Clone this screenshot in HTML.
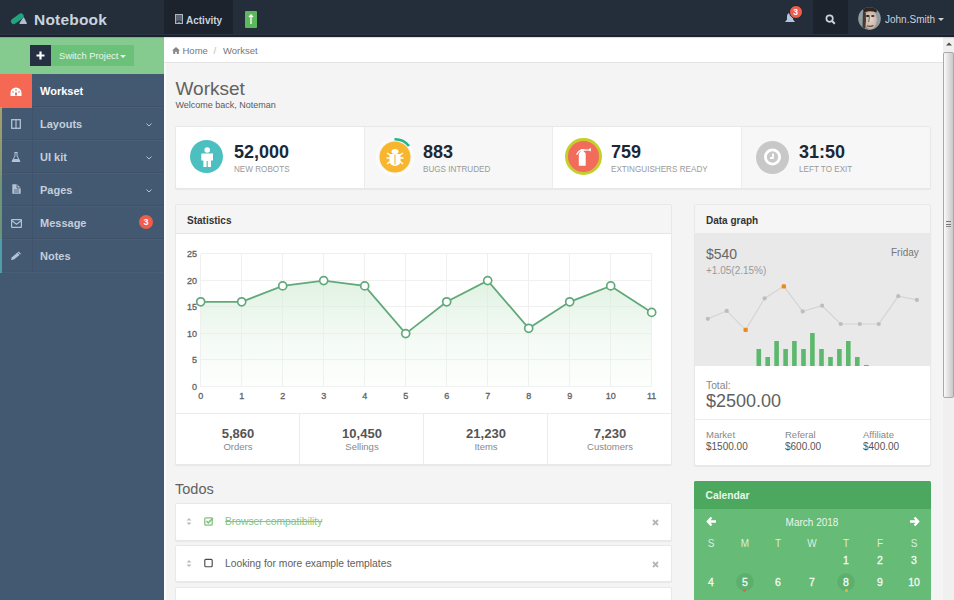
<!DOCTYPE html>
<html><head><meta charset="utf-8">
<style>
*{box-sizing:border-box;margin:0;padding:0}
html,body{width:954px;height:600px;overflow:hidden;background:#f4f4f4;font-family:"Liberation Sans",sans-serif;color:#555}
.a{position:absolute;white-space:nowrap}
#hdr{position:absolute;left:0;top:0;width:954px;height:37px;background:#242d3a;border-bottom:2px solid #1b222b;box-shadow:inset 0 -1px 0 #2a3442,0 1px 1px rgba(0,0,0,0.12);z-index:10}
#brand{left:34px;top:11px;font-size:15.5px;font-weight:bold;color:#c9d3de;letter-spacing:0.2px}
#act{left:164px;top:0;width:69px;height:34px;background:#1c232c}
#srch{left:813px;top:0;width:35px;height:34px;background:#1c232c}
#side{position:absolute;left:0;top:37px;width:164px;height:563px;background:#435871}
#sw{left:0;top:0;width:164px;height:37px;background:#85cb8f}
.nav{position:absolute;left:0;width:164px;height:33px;border-bottom:1px solid #405269;box-shadow:0 1px 0 #485d76}
.nav .ic{position:absolute;left:0;top:0;width:33px;height:33px;border-right:1px solid #3f536c}
.nav .t{position:absolute;left:40px;top:11px;font-size:11px;font-weight:bold;color:#c3cfdc}
.chev{position:absolute;left:146px;top:15px;width:6px;height:6px}
#main{position:absolute;left:164px;top:37px;width:779px;height:563px;background:#f4f4f4;border-left:2px solid #fbfbfb}
#bc{left:0;top:0;width:779px;height:26px;background:#fff;border-bottom:1px solid #e4e4e4}
#sb{position:absolute;left:943px;top:37px;width:11px;height:563px;background:#f0f0f0}
.panel{position:absolute;background:#fff;border:1px solid #e8e8e8;border-radius:2px;box-shadow:0 1px 1px rgba(0,0,0,0.05)}
.ph{position:absolute;left:0;top:0;right:0;height:29px;background:#f5f5f5;border-bottom:1px solid #e6e6e6}
.ph span{position:absolute;left:11px;top:10px;font-size:10px;font-weight:bold;color:#333}
.num{font-size:18px;font-weight:bold;color:#1c2836}
.lbl{font-size:9.8px;color:#9a9a9a;transform:scaleX(0.83);transform-origin:0 0}
.circ{position:absolute;border-radius:50%}
.ax{position:absolute;font-size:9px;color:#666;text-align:center;width:20px}
.ay{position:absolute;font-size:9px;color:#666;text-align:right;width:20px}
.fv{position:absolute;width:124px;text-align:center}
.fv b{display:block;font-size:13px;color:#555}
.fv i{display:block;font-style:normal;font-size:9.5px;color:#888;margin-top:0px}
.cal{position:absolute;width:20px;text-align:center;font-size:10.5px;color:#f4fbf5;-webkit-text-stroke:0.3px #f4fbf5}
</style></head><body>
<div id="hdr">
  <svg class="a" style="left:10px;top:12px" width="18" height="14" viewBox="0 0 18 14"><path d="M10 11.3 L16.3 11.3 L13.6 6 Z" fill="#b3bcd6" stroke="#b3bcd6" stroke-width="1.2" stroke-linejoin="round"/><path d="M3.8 9.3 L10.8 4.2" stroke="#1fa57b" stroke-width="5.6" stroke-linecap="round"/></svg>
  <div id="brand" class="a">Notebook</div>
  <div id="act" class="a">
    <svg class="a" style="left:11px;top:14px" width="8" height="10" viewBox="0 0 8 10"><rect x="0.5" y="0.5" width="7" height="9" fill="#5b6472" stroke="#aab4c4" stroke-width="1"/><path d="M1.5 8.5 Q4 5.5 6.5 8.5" fill="none" stroke="#1c232c" stroke-width="1.2"/><path d="M3 9 Q4 7.8 5 9Z" fill="#c9d3de"/></svg>
    <span class="a" style="left:22px;top:15px;font-size:10px;font-weight:bold;color:#c9d3de">Activity</span>
  </div>
  <div class="a" style="left:245px;top:11px;width:12px;height:17px;background:#5cb85c;border-radius:1px"></div>
  <svg class="a" style="left:245px;top:11px" width="12" height="17" viewBox="0 0 12 17"><path d="M6 4 L6 13 M4 6 L6 4 L8 6" stroke="#fff" stroke-width="1.3" fill="none"/></svg>
  <svg class="a" style="left:784px;top:12px" width="12" height="12" viewBox="0 0 12 12"><path d="M6 1 C3.5 1 3 3 3 5 L3 7.5 L1 10 L11 10 L9 7.5 L9 5 C9 3 8.5 1 6 1Z" fill="#b3c6da"/></svg>
  <div class="a circ" style="left:788.5px;top:4.5px;width:14px;height:14px;background:#ef5d4f;border:1.5px solid #1e2630"></div>
  <div class="a" style="left:789.5px;top:7px;width:12px;text-align:center;font-size:8.5px;font-weight:bold;color:#fff">3</div>
  <div id="srch" class="a">
    <svg class="a" style="left:12px;top:14px" width="11" height="11" viewBox="0 0 11 11"><circle cx="4.6" cy="4.6" r="3.2" stroke="#c9d3de" stroke-width="1.7" fill="none"/><path d="M7 7 L9.8 9.8" stroke="#c9d3de" stroke-width="2"/></svg>
  </div>
  <svg class="a" style="left:858px;top:7px" width="23" height="23" viewBox="0 0 23 23"><defs><clipPath id="av"><circle cx="11.5" cy="11.5" r="11.3"/></clipPath><radialGradient id="fg" cx="0.55" cy="0.5" r="0.6"><stop offset="0" stop-color="#e2d6cc"/><stop offset="0.7" stop-color="#c9b5a6"/><stop offset="1" stop-color="#6d5a4e"/></radialGradient></defs><g clip-path="url(#av)"><rect width="23" height="23" fill="#8e9da1"/><ellipse cx="12" cy="12.5" rx="7" ry="10.5" fill="url(#fg)"/><path d="M4.5 1 Q12 -2 19 2 L18.5 5.5 Q12 3 6 5.5 Z" fill="#2f2622"/><path d="M5 4 L7.8 6 L8 14 L7 22 L4.5 20 Z" fill="#3b2e28" opacity="0.9"/><ellipse cx="9.8" cy="9" rx="1.9" ry="1.1" fill="#231b18"/><ellipse cx="14.8" cy="9" rx="1.7" ry="1" fill="#3a2e28"/><path d="M11.5 9.5 L10.6 15.2" stroke="#8a7060" stroke-width="1.2"/><path d="M9 18.8 Q12.5 20 15.5 18.5" fill="none" stroke="#5a473c" stroke-width="1.1"/></g></svg>
  <div class="a" style="left:885px;top:14px;font-size:10px;color:#c9d3de">John.Smith</div>
  <div class="a" style="left:938px;top:18px;width:0;height:0;border-left:3px solid transparent;border-right:3px solid transparent;border-top:3px solid #c9d3de"></div>
</div>

<div id="side">
  <div id="sw" class="a">
    <div class="a" style="left:30px;top:8px;width:21px;height:21px;background:#253142"></div>
    <svg class="a" style="left:35px;top:13px" width="11" height="11" viewBox="0 0 11 11"><path d="M5.5 1.5 V9.5 M1.5 5.5 H9.5" stroke="#fff" stroke-width="2.2"/></svg>
    <div class="a" style="left:51px;top:8px;width:83px;height:21px;background:#6bc07a"></div>
    <div class="a" style="left:59px;top:12.5px;font-size:9.4px;color:#eaf6ec">Switch Project</div>
    <div class="a" style="left:120px;top:18px;width:0;height:0;border-left:3px solid transparent;border-right:3px solid transparent;border-top:3px solid #eaf6ec"></div>
  </div>
  <!-- NAV -->
  <div class="a" style="left:0;top:70px;width:2px;height:166px;z-index:5;background:linear-gradient(180deg,#b8ab6c 0,#9aa56f 30%,#78a07a 45%,#6f9f7c 78%,#4faab4 80%,#4faab4 100%);opacity:0.85"></div>
  <div class="nav" style="top:37px">
    <div class="ic" style="background:#f56954;border-right:0;width:32px;height:34px"></div>
    <svg class="a" style="left:10px;top:12.5px" width="12" height="10" viewBox="0 0 12 10"><path d="M6 0.5 A5.5 5.5 0 0 0 0.5 6 L0.5 9 L11.5 9 L11.5 6 A5.5 5.5 0 0 0 6 0.5Z" fill="#fff"/><path d="M6 8.5 L6 5.5" stroke="#c0524a" stroke-width="1.5"/><circle cx="3" cy="5" r="0.8" fill="#f56954"/><circle cx="6" cy="3" r="0.8" fill="#f56954"/><circle cx="9" cy="5" r="0.8" fill="#f56954"/></svg>
    <div class="t" style="color:#fff">Workset</div>
  </div>
  <div class="nav" style="top:70px">
    <div class="ic"></div>
    
    <svg class="a" style="left:11px;top:12px" width="10" height="10" viewBox="0 0 10 10"><rect x="0.7" y="0.7" width="8.6" height="8.6" fill="none" stroke="#b3c3d4" stroke-width="1.3"/><path d="M5 0.7 V9.3" stroke="#b3c3d4" stroke-width="1.2"/></svg>
    <div class="t">Layouts</div>
    <svg class="chev" viewBox="0 0 6 6"><path d="M0.5 1.5 L3 4 L5.5 1.5" stroke="#b3c3d4" fill="none" stroke-width="1"/></svg>
  </div>
  <div class="nav" style="top:103px">
    <div class="ic"></div>
    <svg class="a" style="left:11px;top:12px" width="10" height="10" viewBox="0 0 10 10"><path d="M3.5 0.5 H6.5 M4 0.5 V4 L1 9.5 H9 L6 4 V0.5" stroke="#b3c3d4" fill="none" stroke-width="1"/><path d="M2.3 7 H7.7 L9 9.5 H1Z" fill="#b3c3d4"/></svg>
    <div class="t">UI kit</div>
    <svg class="chev" viewBox="0 0 6 6"><path d="M0.5 1.5 L3 4 L5.5 1.5" stroke="#b3c3d4" fill="none" stroke-width="1"/></svg>
  </div>
  <div class="nav" style="top:136px">
    <div class="ic"></div>
    
    <svg class="a" style="left:12px;top:11px" width="9" height="10" viewBox="0 0 9 10"><path d="M0.3 0.3 H5 L8.7 4 V9.7 H0.3Z" fill="#b3c3d4"/><path d="M5 0.3 V4 H8.7" fill="none" stroke="#435670" stroke-width="0.9"/><path d="M2 6 H7 M2 8 H7" stroke="#435670" stroke-width="0.8"/></svg>
    <div class="t">Pages</div>
    <svg class="chev" viewBox="0 0 6 6"><path d="M0.5 1.5 L3 4 L5.5 1.5" stroke="#b3c3d4" fill="none" stroke-width="1"/></svg>
  </div>
  <div class="nav" style="top:169px">
    <div class="ic"></div>
    <svg class="a" style="left:11px;top:12.5px" width="11" height="9" viewBox="0 0 11 9"><rect x="0.6" y="0.6" width="9.8" height="7.8" rx="0.5" fill="none" stroke="#b3c3d4" stroke-width="1.2"/><path d="M0.6 1.5 L5.5 5.3 L10.4 1.5" stroke="#b3c3d4" fill="none" stroke-width="1.2"/></svg>
    <div class="t">Message</div>
    <div class="a circ" style="left:139px;top:9px;width:14px;height:14px;background:#ef5d4f"></div>
    <div class="a" style="left:139px;top:10.5px;width:14px;text-align:center;font-size:9px;font-weight:bold;color:#fff">3</div>
  </div>
  <div class="nav" style="top:202px;border-bottom-color:#415670">
    <div class="ic"></div>
    
    <svg class="a" style="left:10px;top:11px" width="12" height="11" viewBox="0 0 12 11"><path d="M1 10 L1.6 7.6 L8.6 1.6 L11 3.8 L4 9.6Z" fill="#b3c3d4"/><path d="M7.6 2.6 L10 4.8" stroke="#435670" stroke-width="0.8"/></svg>
    <div class="t">Notes</div>
  </div>
</div>

<div id="main"></div>
<div id="bc" class="a" style="left:164px;top:37px">
  <svg class="a" style="left:8px;top:9.5px" width="8" height="7" viewBox="0 0 8 7"><path d="M4 0 L8 3.5 H6.8 V7 H4.8 V4.8 H3.2 V7 H1.2 V3.5 H0Z" fill="#888"/></svg>
  <div class="a" style="left:18.5px;top:7.5px;font-size:9.5px;color:#777">Home</div>
  <div class="a" style="left:49.5px;top:7.5px;font-size:9.5px;color:#bbb">/</div>
  <div class="a" style="left:59px;top:7.5px;font-size:9.5px;color:#777">Workset</div>
</div>
<div class="a" style="left:175.5px;top:78px;font-size:19px;color:#626262">Workset</div>
<div class="a" style="left:175.5px;top:100px;font-size:9px;color:#5a5a5a">Welcome back, Noteman</div>

<!-- STATS -->
<div class="panel" style="left:175px;top:126px;width:756px;height:63px"></div>
<div class="a" style="left:364px;top:127px;width:189px;height:61px;background:#f7f7f7;border-left:1px solid #ececec;border-right:1px solid #ececec"></div>
<div class="a" style="left:741px;top:127px;width:189px;height:61px;background:#f7f7f7;border-left:1px solid #ececec"></div>

<div class="a circ" style="left:190px;top:140px;width:33px;height:33px;background:#4cc0c1"></div>
<svg class="a" style="left:199px;top:146px" width="16" height="22" viewBox="0 0 16 22"><circle cx="8.2" cy="4" r="2.8" fill="#fff"/><path d="M2.3 8 Q2.3 7.5 3 7.5 H13.3 Q14 7 14 7.5 V14.5 H12 V21 H8.8 V15 H7.6 V21 H4.4 V14.5 H2.3Z" fill="#fff"/></svg>
<div class="a num" style="left:234px;top:142px">52,000</div>
<div class="a lbl" style="left:234px;top:163px">NEW ROBOTS</div>

<svg class="a" style="left:374px;top:136px" width="42" height="42" viewBox="0 0 42 42"><circle cx="21" cy="21" r="18" fill="none" stroke="#fbfbfb" stroke-width="2.5"/><path d="M20.5 3.2 A17.8 17.8 0 0 1 35 10" fill="none" stroke="#22b48c" stroke-width="2.6"/><circle cx="21" cy="21" r="15.5" fill="#f8b62f"/>
<g fill="#fff"><ellipse cx="21" cy="15.5" rx="3.5" ry="2.5"/><path d="M15.5 18 H26.5 V25 A5.5 5 0 0 1 15.5 25Z"/><path d="M13 17 L16 19 M29 17 L26 19 M12.5 22 H16 M29.5 22 H26 M13 28 L16 25.5 M29 28 L26 25.5" stroke="#fff" stroke-width="1.4"/></g><path d="M21 18.5 V28.5" stroke="#f8b93c" stroke-width="1.2"/></svg>
<div class="a num" style="left:423px;top:142px">883</div>
<div class="a lbl" style="left:423px;top:163px">BUGS INTRUDED</div>

<div class="a circ" style="left:565px;top:138px;width:37px;height:37px;background:#f26b5b;border:3px solid #c3cf2b"></div>
<svg class="a" style="left:573px;top:146px" width="21" height="21" viewBox="0 0 21 21"><path d="M5.8 8.5 Q5.8 5.6 9.2 5.6 Q12.7 5.6 12.7 8.5 V19.8 H5.8Z" fill="#fff"/><rect x="7.7" y="3" width="3" height="3" fill="#fff"/><path d="M10 3.2 L15.5 3.4 L17.8 1.8 V5.6 L15.5 4.4 L10 5Z" fill="#fff"/><path d="M8.5 4.2 Q5.5 4.8 3.6 8.6" fill="none" stroke="#fff" stroke-width="1.3"/></svg>
<div class="a num" style="left:611px;top:142px">759</div>
<div class="a lbl" style="left:611px;top:163px">EXTINGUISHERS READY</div>

<div class="a circ" style="left:756px;top:140.5px;width:33px;height:33px;background:#c8c8c8"></div>
<svg class="a" style="left:762px;top:146px" width="21" height="21" viewBox="0 0 21 21"><circle cx="10.5" cy="11" r="7.1" fill="none" stroke="#fff" stroke-width="2.8"/><path d="M11 7.5 V12 H8" fill="none" stroke="#fff" stroke-width="1.8"/></svg>
<div class="a num" style="left:799px;top:142px">31:50</div>
<div class="a lbl" style="left:799px;top:163px">LEFT TO EXIT</div>

<!-- STATISTICS -->
<div class="panel" style="left:175px;top:204px;width:497px;height:261px;overflow:hidden">
  <div class="ph"><span>Statistics</span></div>
</div>
<svg class="a" style="left:0;top:0" width="954" height="600">
  <defs><linearGradient id="gf" x1="0" y1="0" x2="0" y2="1"><stop offset="0" stop-color="#d3ecd6" stop-opacity="0.7"/><stop offset="1" stop-color="#eaf6ec" stop-opacity="0.1"/></linearGradient></defs>
  <g stroke="#f0f0f0" stroke-width="1">
    <path d="M200.5 254 V387 M241.5 254 V387 M282.5 254 V387 M323.5 254 V387 M364.5 254 V387 M405.5 254 V387 M446.5 254 V387 M487.5 254 V387 M528.5 254 V387 M569.5 254 V387 M610.5 254 V387 M651.5 254 V387"/>
    <path d="M201 253.5 H652 M201 280.5 H652 M201 306.5 H652 M201 333.5 H652 M201 359.5 H652 M201 386.5 H652"/>
  </g>
  <path d="M200.7,386.6 L200.7,301.8 241.7,301.8 282.7,285.9 323.7,280.6 364.7,285.9 405.7,333.6 446.7,301.8 487.7,280.6 528.7,328.3 569.7,301.8 610.7,285.9 651.7,312.4 L651.7,386.6Z" fill="url(#gf)"/>
  <polyline points="200.7,301.8 241.7,301.8 282.7,285.9 323.7,280.6 364.7,285.9 405.7,333.6 446.7,301.8 487.7,280.6 528.7,328.3 569.7,301.8 610.7,285.9 651.7,312.4" fill="none" stroke="#62a97a" stroke-width="1.8"/>
  <g fill="#fff" stroke="#62a97a" stroke-width="1.7"><circle cx="200.7" cy="301.8" r="4"/><circle cx="241.7" cy="301.8" r="4"/><circle cx="282.7" cy="285.9" r="4"/><circle cx="323.7" cy="280.6" r="4"/><circle cx="364.7" cy="285.9" r="4"/><circle cx="405.7" cy="333.6" r="4"/><circle cx="446.7" cy="301.8" r="4"/><circle cx="487.7" cy="280.6" r="4"/><circle cx="528.7" cy="328.3" r="4"/><circle cx="569.7" cy="301.8" r="4"/><circle cx="610.7" cy="285.9" r="4"/><circle cx="651.7" cy="312.4" r="4"/></g>
  <g font-family="Liberation Sans" font-size="9" fill="#626262" stroke="#626262" stroke-width="0.3" text-anchor="end"><text x="197" y="257">25</text><text x="197" y="284">20</text><text x="197" y="310">15</text><text x="197" y="337">10</text><text x="197" y="363">5</text><text x="197" y="390">0</text></g>
  <g font-family="Liberation Sans" font-size="9" fill="#626262" stroke="#626262" stroke-width="0.3" text-anchor="middle"><text x="200.7" y="399">0</text><text x="241.7" y="399">1</text><text x="282.7" y="399">2</text><text x="323.7" y="399">3</text><text x="364.7" y="399">4</text><text x="405.7" y="399">5</text><text x="446.7" y="399">6</text><text x="487.7" y="399">7</text><text x="528.7" y="399">8</text><text x="569.7" y="399">9</text><text x="610.7" y="399">10</text><text x="651.7" y="399">11</text></g>
</svg>
<div class="a" style="left:176px;top:413px;width:495px;height:1px;background:#ececec"></div>
<div class="a" style="left:299px;top:413px;width:1px;height:51px;background:#ececec"></div>
<div class="a" style="left:423px;top:413px;width:1px;height:51px;background:#ececec"></div>
<div class="a" style="left:547px;top:413px;width:1px;height:51px;background:#ececec"></div>
<div class="fv" style="left:176px;top:426px"><b>5,860</b><i>Orders</i></div>
<div class="fv" style="left:300px;top:426px"><b>10,450</b><i>Sellings</i></div>
<div class="fv" style="left:424px;top:426px"><b>21,230</b><i>Items</i></div>
<div class="fv" style="left:548px;top:426px"><b>7,230</b><i>Customers</i></div>

<!-- TODOS -->
<div class="a" style="left:175px;top:481px;font-size:14.5px;color:#616161">Todos</div>
<div class="panel" style="left:175px;top:503px;width:497px;height:37.5px"></div>
<svg class="a" style="left:186px;top:517px" width="6" height="9" viewBox="0 0 6 9"><path d="M0.5 3.5 L3 1 L5.5 3.5Z M0.5 5.5 L3 8 L5.5 5.5Z" fill="#bbb"/></svg>
<svg class="a" style="left:204px;top:516px" width="10" height="10" viewBox="0 0 10 10"><rect x="0.8" y="1.8" width="7.4" height="7.4" rx="1" fill="none" stroke="#7ec27e" stroke-width="1.3"/><path d="M2.5 5 L4.3 6.8 L9 2" fill="none" stroke="#7ec27e" stroke-width="1.6"/></svg>
<div class="a" style="left:225px;top:516px;font-size:10.3px;color:#84c584;text-decoration:line-through">Browser compatibility</div>
<svg class="a" style="left:652px;top:519px" width="7" height="7" viewBox="0 0 7 7"><path d="M1 1 L6 6 M6 1 L1 6" stroke="#b5b5b5" stroke-width="1.8"/></svg>
<div class="panel" style="left:175px;top:545px;width:497px;height:37px"></div>
<svg class="a" style="left:186px;top:559px" width="6" height="9" viewBox="0 0 6 9"><path d="M0.5 3.5 L3 1 L5.5 3.5Z M0.5 5.5 L3 8 L5.5 5.5Z" fill="#bbb"/></svg>
<svg class="a" style="left:204px;top:558px" width="10" height="10" viewBox="0 0 10 10"><rect x="0.8" y="1.3" width="7.4" height="7.4" rx="1" fill="none" stroke="#4a4a4a" stroke-width="1.15"/></svg>
<div class="a" style="left:225px;top:558px;font-size:10.3px;color:#5e5e5e">Looking for more example templates</div>
<svg class="a" style="left:652px;top:561px" width="7" height="7" viewBox="0 0 7 7"><path d="M1 1 L6 6 M6 1 L1 6" stroke="#b5b5b5" stroke-width="1.8"/></svg>
<div class="panel" style="left:175px;top:586.5px;width:497px;height:30px"></div>

<!-- DATA GRAPH -->
<div class="panel" style="left:694px;top:204px;width:237px;height:262px;overflow:hidden">
  <div class="ph"><span>Data graph</span></div>
  <div class="a" style="left:0;top:28px;width:237px;height:133px;background:#e9e9e9"></div>
</div>
<div class="a" style="left:706px;top:246px;font-size:14px;color:#666">$540</div>
<div class="a" style="left:891px;top:247px;font-size:10px;color:#777">Friday</div>
<div class="a" style="left:706px;top:265px;font-size:10px;color:#999">+1.05(2.15%)</div>
<svg class="a" style="left:0;top:0" width="954" height="600">
  <polyline points="707.8,318.8 726.7,310.9 745.6,329.8 764.7,298.3 783.8,286.3 802.7,311.4 822.1,305.7 840.7,324 859.8,324 878.7,324 898.3,296.2 916.9,299.9" fill="none" stroke="#d4d4d4" stroke-width="1.2"/>
  <g fill="#bdbdbd"><circle cx="707.8" cy="318.8" r="2.1"/><circle cx="726.7" cy="310.9" r="2.1"/><circle cx="764.7" cy="298.3" r="2.1"/><circle cx="802.7" cy="311.4" r="2.1"/><circle cx="822.1" cy="305.7" r="2.1"/><circle cx="840.7" cy="324" r="2.1"/><circle cx="859.8" cy="324" r="2.1"/><circle cx="878.7" cy="324" r="2.1"/><circle cx="898.3" cy="296.2" r="2.1"/><circle cx="916.9" cy="299.9" r="2.1"/></g>
  <g fill="#ee8a1a"><rect x="743.5" y="327.7" width="4.3" height="4.3" rx="1.2"/><rect x="781.7" y="284.2" width="4.3" height="4.3" rx="1.2"/></g>
  <g fill="#5cb86c"><rect x="756.5" y="349" width="4.6" height="17"/><rect x="765.4" y="357" width="4.6" height="9"/><rect x="774.3" y="341" width="4.6" height="25"/><rect x="783.3" y="349" width="4.6" height="17"/><rect x="792.1" y="341" width="4.6" height="25"/><rect x="801.2" y="349" width="4.6" height="17"/><rect x="810.1" y="333" width="4.6" height="33"/><rect x="819.2" y="349" width="4.6" height="17"/><rect x="828.2" y="357" width="4.6" height="9"/><rect x="837.1" y="349" width="4.6" height="17"/><rect x="846" y="341" width="4.6" height="25"/><rect x="855" y="357" width="4.6" height="9"/><rect x="864" y="365" width="4.6" height="1"/></g>
</svg>
<div class="a" style="left:706px;top:380px;font-size:10.3px;color:#888">Total:</div>
<div class="a" style="left:706px;top:391px;font-size:18px;color:#616161">$2500.00</div>
<div class="a" style="left:695px;top:419px;width:235px;height:1px;background:#ececec"></div>
<div class="a" style="left:706px;top:429px;font-size:9.5px;color:#888">Market</div>
<div class="a" style="left:706px;top:441px;font-size:10px;color:#555">$1500.00</div>
<div class="a" style="left:785px;top:429px;font-size:9.5px;color:#888">Referal</div>
<div class="a" style="left:785px;top:441px;font-size:10px;color:#555">$600.00</div>
<div class="a" style="left:863px;top:429px;font-size:9.5px;color:#888">Affiliate</div>
<div class="a" style="left:863px;top:441px;font-size:10px;color:#555">$400.00</div>

<!-- CALENDAR -->
<div class="a" style="left:694px;top:481px;width:237px;height:130px;background:#66bb77;border-radius:2px"></div>
<div class="a" style="left:694px;top:481px;width:237px;height:28px;background:#4ca85f;border-radius:2px 2px 0 0"></div>
<div class="a" style="left:705.5px;top:490px;font-size:10.3px;font-weight:bold;color:#e6f6e8">Calendar</div>
<svg class="a" style="left:706px;top:516px" width="11" height="11" viewBox="0 0 11 11"><path d="M5.5 1.5 L1.8 5.5 L5.5 9.5 M2 5.5 H10" fill="none" stroke="#fff" stroke-width="2.3"/></svg>
<svg class="a" style="left:909px;top:516px" width="11" height="11" viewBox="0 0 11 11"><path d="M5.5 1.5 L9.2 5.5 L5.5 9.5 M9 5.5 H1" fill="none" stroke="#fff" stroke-width="2.3"/></svg>
<div class="a" style="left:772px;top:517px;width:80px;text-align:center;font-size:10px;color:#eaf6ec">March 2018</div>
<div class="cal" style="left:701px;top:537.5px;color:#d9efdd;font-size:10px;-webkit-text-stroke:0">S</div><div class="cal" style="left:735px;top:537.5px;color:#d9efdd;font-size:10px;-webkit-text-stroke:0">M</div><div class="cal" style="left:768px;top:537.5px;color:#d9efdd;font-size:10px;-webkit-text-stroke:0">T</div><div class="cal" style="left:802px;top:537.5px;color:#d9efdd;font-size:10px;-webkit-text-stroke:0">W</div><div class="cal" style="left:836px;top:537.5px;color:#d9efdd;font-size:10px;-webkit-text-stroke:0">T</div><div class="cal" style="left:870px;top:537.5px;color:#d9efdd;font-size:10px;-webkit-text-stroke:0">F</div><div class="cal" style="left:904px;top:537.5px;color:#d9efdd;font-size:10px;-webkit-text-stroke:0">S</div>
<div class="cal" style="left:836px;top:554px">1</div><div class="cal" style="left:870px;top:554px">2</div><div class="cal" style="left:904px;top:554px">3</div>
<div class="a circ" style="left:734.5px;top:571.5px;width:20px;height:20px;background:#5daf6d;border:1px solid #6bbd7a"></div>
<div class="a circ" style="left:836px;top:571.5px;width:20px;height:20px;background:#5daf6d;border:1px solid #6bbd7a"></div>
<div class="cal" style="left:701px;top:576px">4</div><div class="cal" style="left:735px;top:576px">5</div><div class="cal" style="left:768px;top:576px">6</div><div class="cal" style="left:802px;top:576px">7</div><div class="cal" style="left:836px;top:576px">8</div><div class="cal" style="left:870px;top:576px">9</div><div class="cal" style="left:904px;top:576px">10</div>
<div class="a circ" style="left:743px;top:589px;width:3px;height:3px;background:#e8604c"></div>
<div class="a circ" style="left:845px;top:589px;width:3px;height:3px;background:#f0b429"></div>
<div id="sb" style="background:#f0f0f0">
  <svg class="a" style="left:3px;top:5px" width="6" height="4" viewBox="0 0 6 4"><path d="M0 3.5 L3 0.5 L6 3.5Z" fill="#4a4a4a"/></svg>
  <div class="a" style="left:0;top:15px;width:11px;height:346px;border:1px solid #a9a9a9;border-radius:2px;background:linear-gradient(90deg,#fafafc 0,#efeff0 20%,#c9c9c9 100%)"></div>
  <div class="a" style="left:3px;top:184px;width:5px;height:1px;background:#777"></div>
  <div class="a" style="left:3px;top:186.5px;width:5px;height:1px;background:#777"></div>
  <div class="a" style="left:3px;top:189px;width:5px;height:1px;background:#888"></div>
</div><!-- end sb -->
</body></html>
